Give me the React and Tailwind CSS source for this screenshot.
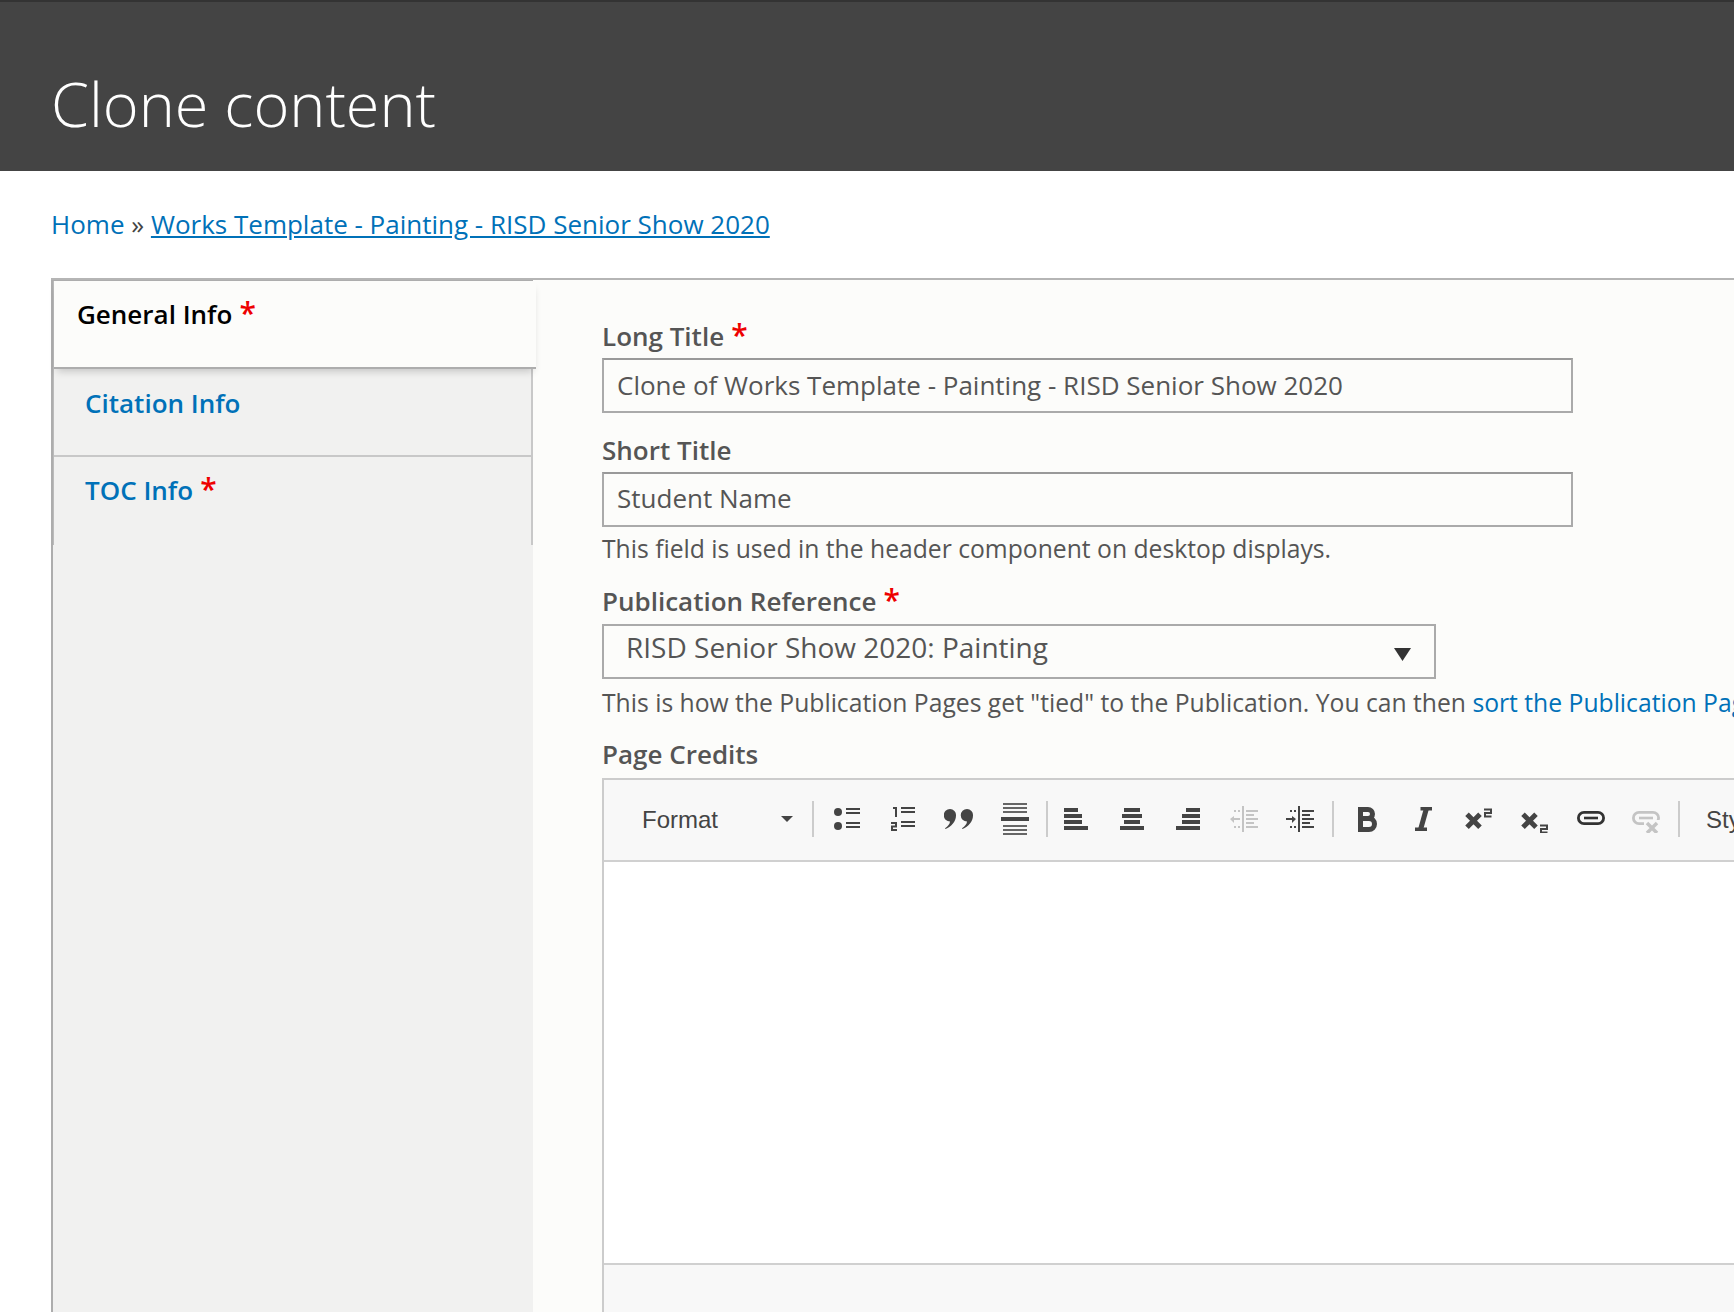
import { useState } from 'react'

const DARK = '#444444'
const OFF = '#c4c4c4'

function Star() {
  return <span className="text-[#ee0000] font-semibold ml-[7px] text-[30px] leading-none">*</span>
}

function Bullets() {
  return (
    <svg width="26" height="22" fill={DARK}>
      <circle cx="4" cy="4" r="4" />
      <circle cx="4" cy="18" r="4" />
      <rect x="12" y="0" width="14" height="2" />
      <rect x="12" y="4" width="14" height="2" />
      <rect x="12" y="14" width="14" height="2" />
      <rect x="12" y="18" width="14" height="2" />
    </svg>
  )
}

function Numbered() {
  return (
    <svg width="25" height="24" fill={DARK}>
      <path d="M2 0h4v10H4V2H2z" />
      <path d="M0 15h6v5.500H2v1.500h4v2H0v-5.500h4V17H0z" />
      <rect x="10" y="0" width="14" height="2" />
      <rect x="10" y="4" width="14" height="2" />
      <rect x="10" y="14" width="14" height="2" />
      <rect x="10" y="18" width="14" height="2" />
    </svg>
  )
}

function Quote() {
  const comma = 'M6 0a6 6 0 0 1 6 6.500c0 6-4.500 11-10.500 13.500l-.5-.8c3-2 4.800-4 5-6.700A6 6 0 0 1 6 0z'
  return (
    <svg width="31" height="20" fill={DARK}>
      <path d={comma} />
      <path d={comma} transform="translate(17 0)" />
    </svg>
  )
}

function Rule() {
  return (
    <svg width="29" height="32" fill="#666666">
      <rect x="2" y="0" width="24" height="2" />
      <rect x="2" y="4" width="24" height="2" />
      <rect x="2" y="8" width="24" height="2" />
      <rect x="0" y="14" width="28" height="4" fill={DARK} />
      <rect x="2" y="22" width="24" height="2" />
      <rect x="2" y="26" width="24" height="2" />
      <rect x="2" y="30" width="24" height="2" />
    </svg>
  )
}

function Align({ bars }) {
  return (
    <svg width="24" height="22" fill={DARK}>
      {bars.map(([x, w], i) => (
        <rect key={i} x={x} y={i * 6} width={w} height="4" />
      ))}
    </svg>
  )
}

function Indent({ color, out }) {
  return (
    <svg width="28" height="26" fill={color}>
      <rect x="12" y="0" width="2" height="26" />
      <rect x="16" y="4" width="12" height="2" />
      <rect x="16" y="8" width="8" height="2" />
      <rect x="16" y="12" width="12" height="2" />
      <rect x="16" y="16" width="8" height="2" />
      <rect x="16" y="20" width="12" height="2" />
      <rect x="4" y="4" width="2" height="2" />
      <rect x="8" y="4" width="2" height="2" />
      <rect x="4" y="20" width="2" height="2" />
      <rect x="8" y="20" width="2" height="2" />
      {out ? (
        <path d="M0 13l4-3v2h6v2H4v3z" />
      ) : (
        <path d="M10 13l-4-3v2H0v2h6v3z" />
      )}
    </svg>
  )
}

function BoldIcon() {
  return (
    <svg width="19" height="25" fill="none" stroke={DARK} strokeWidth="5">
      <path d="M2.500 2.500H10a4.500 4.500 0 0 1 0 9H2.500M2.500 11.500H11a5.500 5.500 0 0 1 0 11H2.500M2.500 0v25" />
    </svg>
  )
}

function ItalicIcon() {
  return (
    <svg width="17" height="24" fill="none" stroke={DARK}>
      <path d="M5.500 1.700H17M0 22.300h12" strokeWidth="3.400" />
      <path d="M11.300 2L5.700 22" strokeWidth="5" />
    </svg>
  )
}

function Cross({ x = 0, y = 0, s = 13, color = DARK, w = 5 }) {
  return (
    <path d={`M${x} ${y}l${s} ${s}M${x + s} ${y}l${-s} ${s}`} stroke={color} strokeWidth={w} fill="none" />
  )
}

function Script({ sup }) {
  const numeral = (x, y) => `M${x} ${y}h7v3.500h-6v3.500h6.500`
  return (
    <svg width="29" height="27" fill="none">
      <Cross x={2} y={8.300} />
      <path d={sup ? numeral(19, 3.500) : numeral(19, 19.500)} stroke={DARK} strokeWidth="2" />
    </svg>
  )
}

function Chain({ color, broken }) {
  return (
    <svg width={broken ? 30 : 28} height="28" fill="none">
      <rect x="1.400" y="7.400" width="25.200" height="11.200" rx="5.600" stroke={color} strokeWidth="2.800" />
      <rect x="7" y="11.700" width="14" height="2.600" fill={color} />
      {broken && <rect x="12" y="15" width="16" height="13" fill="#f8f8f8" />}
      {broken && <Cross x={15} y={18} s={10} color={color} w={3.500} />}
    </svg>
  )
}

function ToolButton({ children }) {
  return <span className="w-[56px] h-[36px] flex items-center justify-center shrink-0">{children}</span>
}

function Separator() {
  return <span className="w-[2px] h-[36px] bg-[#cccccc] shrink-0" />
}

export default function App() {
  const [active] = useState('general')

  return (
    <div className="w-[1734px] h-[1312px] overflow-hidden bg-white font-['Open_Sans',sans-serif] text-[#555555]">
      <header className="h-[171px] bg-[#444444] border-t-2 border-[#333333] pl-[51px] pt-[62px]">
        <h1 className="text-[61.200px] leading-[80px] font-light text-white whitespace-nowrap">Clone content</h1>
      </header>

      <nav className="h-[107px] pl-[51px] pt-[35px] text-[26px] leading-[36px] text-[#444444] whitespace-nowrap">
        <a href="#home" className="text-[#0071b8]">Home</a>
        <span> » </span>
        <a href="#template" className="text-[#0071b8] underline">Works Template - Painting - RISD Senior Show 2020</a>
      </nav>

      <div className="ml-[51px] flex border-t-2 border-[#b5b5b5] h-[1034px]">
        <aside className="w-[482px] shrink-0 bg-[#f1f1f0] border-l-2 border-t border-[#adadad]">
          <ul className="border-l border-[#bbbbbb]">
            <li className={`relative h-[88px] w-[482px] -mr-[3px] pl-[23px] pt-[15px] bg-[#fcfcfa] border-b-2 border-[#adadad] shadow-[0_5px_8px_-3px_rgba(0,0,0,0.2)] ${active === 'general' ? 'z-10' : ''}`}>
              <a href="#general" className="text-[26px] leading-[36px] font-semibold text-black">General Info<Star /></a>
            </li>
            <li className="h-[88px] pl-[31px] pt-[16px] border-r-2 border-b-2 border-[#c8c8c8]">
              <a href="#citation" className="text-[26px] leading-[36px] font-semibold text-[#0071b8]">Citation Info</a>
            </li>
            <li className="h-[88px] pl-[31px] pt-[15px] border-r-2 border-[#c8c8c8]">
              <a href="#toc" className="text-[26px] leading-[36px] font-semibold text-[#0071b8]">TOC Info<Star /></a>
            </li>
          </ul>
        </aside>

        <main className="flex-1 min-w-0 bg-[#fcfcfa] pl-[69px] pt-[39px] overflow-hidden">
          <label className="block h-[36px] text-[26px] leading-[34px] font-semibold">Long Title<Star /></label>
          <input
            readOnly
            value="Clone of Works Template - Painting - RISD Senior Show 2020"
            className="block mt-[3px] w-[971px] h-[55px] pl-[13px] pb-[2px] bg-transparent border-2 border-[#aaaaaa] border-t-[#999999] text-[26px] text-[#555555] outline-none"
          />

          <label className="block mt-[20px] h-[36px] text-[26px] leading-[34px] font-semibold">Short Title</label>
          <input
            readOnly
            value="Student Name"
            className="block mt-[3px] w-[971px] h-[55px] pl-[13px] pb-[3px] bg-transparent border-2 border-[#aaaaaa] border-t-[#999999] text-[26px] text-[#555555] outline-none"
          />
          <p className="mt-[5px] h-[36px] text-[24.700px] leading-[34px] whitespace-nowrap">This field is used in the header component on desktop displays.</p>

          <label className="block mt-[16px] h-[36px] text-[26px] leading-[34px] font-semibold">Publication Reference<Star /></label>
          <div className="relative mt-[4px] w-[834px] h-[55px] border-2 border-[#aaaaaa] flex items-start pl-[22px] pt-[2px] text-[28px] leading-[38px]">
            RISD Senior Show 2020: Painting
            <svg className="absolute right-[23px] top-[22px]" width="17" height="13" fill="#333333">
              <path d="M0 0h17l-8.500 13z" />
            </svg>
          </div>
          <p className="mt-[6px] h-[36px] text-[24.700px] leading-[36px] whitespace-nowrap">
            This is how the Publication Pages get "tied" to the Publication. You can then <a href="#sort" className="text-[#0071b8]">sort the Publication Pages</a>
          </p>

          <label className="block mt-[16px] h-[36px] text-[26px] leading-[34px] font-semibold">Page Credits</label>
          <div className="mt-[5px] w-[1300px] border-2 border-[#cccccc] bg-white">
            <div className="h-[82px] bg-[#f8f8f8] border-b-2 border-[#d0d0d0] flex items-center pl-[38px] pb-[2px] font-['Liberation_Sans',sans-serif] text-[24px] text-[#444444]">
              <span className="w-[170px] shrink-0 flex items-center justify-between pr-[19px]">
                <span className="pt-[1px]">Format</span>
                <svg width="12" height="6" fill="#444444"><path d="M0 0h12L6 6z" /></svg>
              </span>
              <Separator />
              <span className="w-[5px] shrink-0" />
              <ToolButton><Bullets /></ToolButton>
              <ToolButton><Numbered /></ToolButton>
              <ToolButton><Quote /></ToolButton>
              <ToolButton><Rule /></ToolButton>
              <span className="w-[3px] shrink-0" />
              <Separator />
              <ToolButton><Align bars={[[0, 14], [0, 18], [0, 18], [0, 24]]} /></ToolButton>
              <ToolButton><Align bars={[[4, 16], [2, 20], [4, 16], [0, 24]]} /></ToolButton>
              <ToolButton><Align bars={[[10, 14], [6, 18], [6, 18], [0, 24]]} /></ToolButton>
              <ToolButton><Indent color={OFF} out /></ToolButton>
              <ToolButton><Indent color={DARK} /></ToolButton>
              <span className="w-[4px] shrink-0" />
              <Separator />
              <span className="w-[5px] shrink-0" />
              <ToolButton><BoldIcon /></ToolButton>
              <ToolButton><ItalicIcon /></ToolButton>
              <ToolButton><Script sup /></ToolButton>
              <ToolButton><Script /></ToolButton>
              <ToolButton><Chain color="#333333" /></ToolButton>
              <ToolButton><Chain color={OFF} broken /></ToolButton>
              <span className="w-[3px] shrink-0" />
              <Separator />
              <span className="ml-[26px] pt-[1px]">Styles</span>
            </div>
            <div className="h-[403px] bg-white border-b-2 border-[#d0d0d0]" />
            <div className="h-[80px] bg-[#f8f8f8]" />
          </div>
        </main>
      </div>
    </div>
  )
}
